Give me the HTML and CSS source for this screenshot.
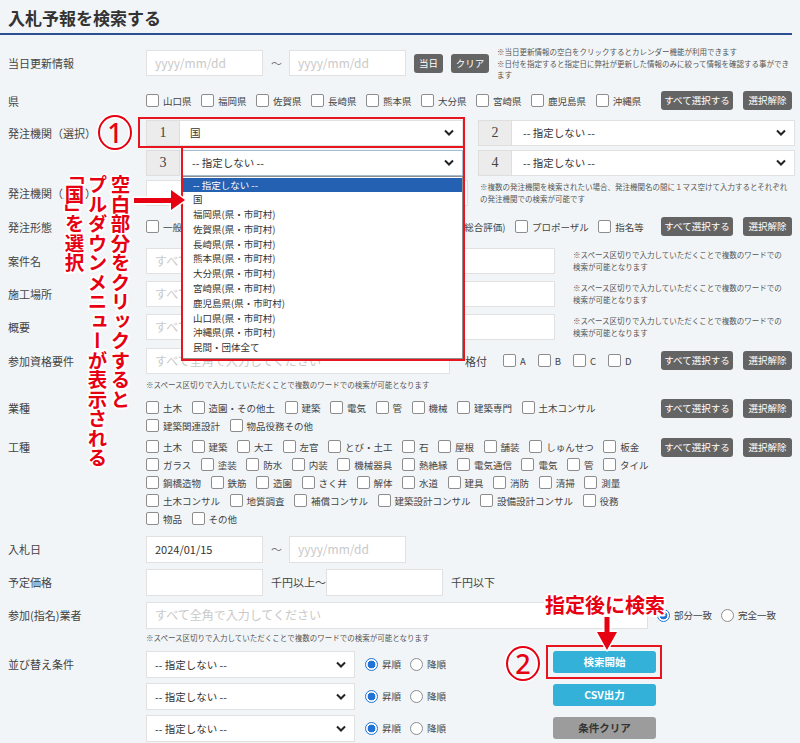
FILE: index.html
```html
<!DOCTYPE html>
<html lang="ja">
<head>
<meta charset="utf-8">
<title>入札予報を検索する</title>
<link rel="stylesheet" href="styles.css">
</head>
<body>
<div class="page">
  <h1 class="title">入札予報を検索する</h1>
  <div class="form">

    <div class="row row-c mt11">
      <div class="label">当日更新情報</div>
      <div class="field">
        <input class="inp w117" type="text" placeholder="yyyy/mm/dd">
        <span class="tilde">〜</span>
        <input class="inp w117" type="text" placeholder="yyyy/mm/dd">
        <button type="button" class="gbtn w29">当日</button>
        <button type="button" class="gbtn w38">クリア</button>
        <p class="note w295">※当日更新情報の空白をクリックするとカレンダー機能が利用できます<br>※日付を指定すると指定日に弊社が更新した情報のみに絞って情報を確認する事ができます</p>
      </div>
    </div>

    <div class="row mt10">
      <div class="label l20">県</div>
      <div class="field f20">
        <div class="cbs">
          <label class="cb"><span class="box"></span>山口県</label>
          <label class="cb"><span class="box"></span>福岡県</label>
          <label class="cb"><span class="box"></span>佐賀県</label>
          <label class="cb"><span class="box"></span>長崎県</label>
          <label class="cb"><span class="box"></span>熊本県</label>
          <label class="cb"><span class="box"></span>大分県</label>
          <label class="cb"><span class="box"></span>宮崎県</label>
          <label class="cb"><span class="box"></span>鹿児島県</label>
          <label class="cb"><span class="box"></span>沖縄県</label>
        </div>
        <div class="btns">
          <button type="button" class="gbtn w72">すべて選択する</button>
          <button type="button" class="gbtn w49">選択解除</button>
        </div>
      </div>
    </div>

    <div class="row mt9">
      <div class="label">発注機関（選択）</div>
      <div class="selgrid">
        <div class="sel">
          <span class="num">1</span>
          <div class="select"><span>国</span><svg class="chev" width="10" height="7" viewBox="0 0 10 7"><path d="M1 1.5 L5 5.5 L9 1.5" fill="none" stroke="#222" stroke-width="2"/></svg></div>
        </div>
        <div class="sel">
          <span class="num">2</span>
          <div class="select pl11"><span>-- 指定しない --</span><svg class="chev" width="10" height="7" viewBox="0 0 10 7"><path d="M1 1.5 L5 5.5 L9 1.5" fill="none" stroke="#222" stroke-width="2"/></svg></div>
        </div>
        <div class="sel">
          <span class="num">3</span>
          <div class="select focus"><span>-- 指定しない --</span><svg class="chev" width="10" height="7" viewBox="0 0 10 7"><path d="M1 1.5 L5 5.5 L9 1.5" fill="none" stroke="#222" stroke-width="2"/></svg>
            <ul class="dropdown">
              <li class="hl">-- 指定しない --</li>
              <li>国</li>
              <li>福岡県(県・市町村)</li>
              <li>佐賀県(県・市町村)</li>
              <li>長崎県(県・市町村)</li>
              <li>熊本県(県・市町村)</li>
              <li>大分県(県・市町村)</li>
              <li>宮崎県(県・市町村)</li>
              <li>鹿児島県(県・市町村)</li>
              <li>山口県(県・市町村)</li>
              <li>沖縄県(県・市町村)</li>
              <li>民間・団体全て</li>
            </ul>
          </div>
        </div>
        <div class="sel">
          <span class="num">4</span>
          <div class="select pl11"><span>-- 指定しない --</span><svg class="chev" width="10" height="7" viewBox="0 0 10 7"><path d="M1 1.5 L5 5.5 L9 1.5" fill="none" stroke="#222" stroke-width="2"/></svg></div>
        </div>
      </div>
    </div>

    <div class="row mt4">
      <div class="label">発注機関（入力）</div>
      <div class="field">
        <input class="inp w322" type="text">
        <p class="note w312 ml12">※複数の発注機関を検索されたい場合、発注機関名の間に１マス空けて入力するとそれぞれの発注機関での検索が可能です</p>
      </div>
    </div>

    <div class="row mt11">
      <div class="label l20">発注形態</div>
      <div class="field f20">
        <div class="cbs">
          <label class="cb"><span class="box"></span>一般競争入札</label>
          <label class="cb"><span class="box"></span>指名競争入札</label>
          <label class="cb"><span class="box"></span>随意契約等</label>
          <label class="cb"><span class="box"></span>一般競争入札(総合評価)</label>
          <label class="cb"><span class="box"></span>プロポーザル</label>
          <label class="cb"><span class="box"></span>指名等</label>
        </div>
        <div class="btns">
          <button type="button" class="gbtn w72">すべて選択する</button>
          <button type="button" class="gbtn w49">選択解除</button>
        </div>
      </div>
    </div>

    <div class="row mt11">
      <div class="label">案件名</div>
      <div class="field">
        <input class="inp w409" type="text" placeholder="すべて全角で入力してください">
        <p class="note w215 ml18">※スペース区切りで入力していただくことで複数のワードでの検索が可能となります</p>
      </div>
    </div>

    <div class="row mt7">
      <div class="label">施工場所</div>
      <div class="field">
        <input class="inp w409" type="text" placeholder="すべて全角で入力してください">
        <p class="note w215 ml18">※スペース区切りで入力していただくことで複数のワードでの検索が可能となります</p>
      </div>
    </div>

    <div class="row mt7">
      <div class="label">概要</div>
      <div class="field">
        <input class="inp w409" type="text" placeholder="すべて全角で入力してください">
        <p class="note w215 ml18">※スペース区切りで入力していただくことで複数のワードでの検索が可能となります</p>
      </div>
    </div>

    <div class="row mt8">
      <div class="label">参加資格要件</div>
      <div class="field">
        <input class="inp w304" type="text" placeholder="すべて全角で入力してください">
        <span class="txt ml15">格付</span>
        <div class="cbs abc">
          <label class="cb"><span class="box"></span>A</label>
          <label class="cb"><span class="box"></span>B</label>
          <label class="cb"><span class="box"></span>C</label>
          <label class="cb"><span class="box"></span>D</label>
        </div>
        <div class="btns">
          <button type="button" class="gbtn w72">すべて選択する</button>
          <button type="button" class="gbtn w49">選択解除</button>
        </div>
      </div>
    </div>
    <p class="note subnote">※スペース区切りで入力していただくことで複数のワードでの検索が可能となります</p>

    <div class="row mt9">
      <div class="label l18">業種</div>
      <div class="field ftop">
        <div class="cbs wrap">
          <label class="cb"><span class="box"></span>土木</label>
          <label class="cb"><span class="box"></span>造園・その他土</label>
          <label class="cb"><span class="box"></span>建築</label>
          <label class="cb"><span class="box"></span>電気</label>
          <label class="cb"><span class="box"></span>管</label>
          <label class="cb"><span class="box"></span>機械</label>
          <label class="cb"><span class="box"></span>建築専門</label>
          <label class="cb"><span class="box"></span>土木コンサル</label>
          <label class="cb"><span class="box"></span>建築関連設計</label>
          <label class="cb"><span class="box"></span>物品役務その他</label>
        </div>
        <div class="btns">
          <button type="button" class="gbtn w72">すべて選択する</button>
          <button type="button" class="gbtn w49">選択解除</button>
        </div>
      </div>
    </div>

    <div class="row mt3">
      <div class="label l18">工種</div>
      <div class="field ftop">
        <div class="cbs wrap">
          <label class="cb"><span class="box"></span>土木</label>
          <label class="cb"><span class="box"></span>建築</label>
          <label class="cb"><span class="box"></span>大工</label>
          <label class="cb"><span class="box"></span>左官</label>
          <label class="cb"><span class="box"></span>とび・土工</label>
          <label class="cb"><span class="box"></span>石</label>
          <label class="cb"><span class="box"></span>屋根</label>
          <label class="cb"><span class="box"></span>舗装</label>
          <label class="cb"><span class="box"></span>しゅんせつ</label>
          <label class="cb"><span class="box"></span>板金</label>
          <label class="cb"><span class="box"></span>ガラス</label>
          <label class="cb"><span class="box"></span>塗装</label>
          <label class="cb"><span class="box"></span>防水</label>
          <label class="cb"><span class="box"></span>内装</label>
          <label class="cb"><span class="box"></span>機械器具</label>
          <label class="cb"><span class="box"></span>熱絶縁</label>
          <label class="cb"><span class="box"></span>電気通信</label>
          <label class="cb"><span class="box"></span>電気</label>
          <label class="cb"><span class="box"></span>管</label>
          <label class="cb"><span class="box"></span>タイル</label>
          <label class="cb"><span class="box"></span>鋼橋造物</label>
          <label class="cb"><span class="box"></span>鉄筋</label>
          <label class="cb"><span class="box"></span>造園</label>
          <label class="cb"><span class="box"></span>さく井</label>
          <label class="cb"><span class="box"></span>解体</label>
          <label class="cb"><span class="box"></span>水道</label>
          <label class="cb"><span class="box"></span>建具</label>
          <label class="cb"><span class="box"></span>消防</label>
          <label class="cb"><span class="box"></span>清掃</label>
          <label class="cb"><span class="box"></span>測量</label>
          <label class="cb"><span class="box"></span>土木コンサル</label>
          <label class="cb"><span class="box"></span>地質調査</label>
          <label class="cb"><span class="box"></span>補償コンサル</label>
          <label class="cb"><span class="box"></span>建築設計コンサル</label>
          <label class="cb"><span class="box"></span>設備設計コンサル</label>
          <label class="cb"><span class="box"></span>役務</label>
          <label class="cb"><span class="box"></span>物品</label>
          <label class="cb"><span class="box"></span>その他</label>
        </div>
        <div class="btns">
          <button type="button" class="gbtn w72">すべて選択する</button>
          <button type="button" class="gbtn w49">選択解除</button>
        </div>
      </div>
    </div>

    <div class="row mt8">
      <div class="label l27">入札日</div>
      <div class="field">
        <input class="inp h27 w117" type="text" value="2024/01/15">
        <span class="tilde">〜</span>
        <input class="inp h27 w117" type="text" placeholder="yyyy/mm/dd">
      </div>
    </div>

    <div class="row mt6">
      <div class="label l27">予定価格</div>
      <div class="field">
        <input class="inp h27 w117" type="text">
        <span class="txt ml8 w55">千円以上〜</span>
        <input class="inp h27 w117 ml7" type="text">
        <span class="txt ml8">千円以下</span>
      </div>
    </div>

    <div class="row mt6">
      <div class="label l27">参加(指名)業者</div>
      <div class="field">
        <input class="inp h27 w502" type="text" placeholder="すべて全角で入力してください">
        <label class="rd ml9"><span class="radio on"></span>部分一致</label>
        <label class="rd ml9"><span class="radio"></span>完全一致</label>
      </div>
    </div>
    <p class="note subnote sub2">※スペース区切りで入力していただくことで複数のワードでの検索が可能となります</p>

    <div class="row mt8">
      <div class="label l27">並び替え条件</div>
      <div class="sorts">
        <div class="sortline">
          <div class="select w200"><span>-- 指定しない --</span><svg class="chev" width="10" height="7" viewBox="0 0 10 7"><path d="M1 1.5 L5 5.5 L9 1.5" fill="none" stroke="#222" stroke-width="2"/></svg></div>
          <label class="rd ml10"><span class="radio on"></span>昇順</label>
          <label class="rd ml9"><span class="radio"></span>降順</label>
        </div>
        <div class="sortline">
          <div class="select w200"><span>-- 指定しない --</span><svg class="chev" width="10" height="7" viewBox="0 0 10 7"><path d="M1 1.5 L5 5.5 L9 1.5" fill="none" stroke="#222" stroke-width="2"/></svg></div>
          <label class="rd ml10"><span class="radio on"></span>昇順</label>
          <label class="rd ml9"><span class="radio"></span>降順</label>
        </div>
        <div class="sortline">
          <div class="select w200"><span>-- 指定しない --</span><svg class="chev" width="10" height="7" viewBox="0 0 10 7"><path d="M1 1.5 L5 5.5 L9 1.5" fill="none" stroke="#222" stroke-width="2"/></svg></div>
          <label class="rd ml10"><span class="radio on"></span>昇順</label>
          <label class="rd ml9"><span class="radio"></span>降順</label>
        </div>
      </div>
      <div class="actions">
        <button type="button" class="mbtn cyan">検索開始</button>
        <button type="button" class="mbtn cyan">CSV出力</button>
        <button type="button" class="mbtn gray">条件クリア</button>
      </div>
    </div>

  </div>

  <!-- annotations -->
  <div class="redbox rb1"></div>
  <div class="redbox rb2"></div>
  <div class="redbox rb3"></div>
  <div class="circ c1">1</div>
  <div class="circ c2">2</div>
  <div class="vtext">空白部分をクリックすると<br>プルダウンメニューが表示される<br>「国」を選択</div>
  <svg class="arrow-r" width="58" height="26" viewBox="0 0 58 26"><polygon points="3,10 40,10 40,2 54,12 40,22 40,15 3,15" fill="#e60012" stroke="#fff" stroke-width="3" paint-order="stroke" stroke-linejoin="round"/></svg>
  <div class="guide2">指定後に検索</div>
  <svg class="arrow-d" width="26" height="38" viewBox="0 0 26 38"><polygon points="10.5,2 15.5,2 15.5,17 23,17 13,35 3,17 10.5,17" fill="#e60012" stroke="#fff" stroke-width="3" paint-order="stroke" stroke-linejoin="round"/></svg>
</div>
</body>
</html>
```

FILE: styles.css
```css
* { box-sizing: border-box; }
html, body { margin: 0; padding: 0; }
body {
  background: #f2f5f7;
  font-family: "Noto Sans CJK JP", "Noto Sans", sans-serif;
  color: #444;
}
.page { position: relative; width: 800px; height: 743px; overflow: hidden; }

.title {
  margin: 0;
  width: 792px;
  padding: 7px 0 4px 8px;
  font-size: 17px;
  line-height: 22px;
  font-weight: 700;
  color: #333;
  border-bottom: 2px solid #2b4f91;
}

.form { padding-right: 8px; }

.note {
  margin: 0;
  font-size: 7.5px;
  line-height: 11.5px;
  color: #555;
}

.row { display: flex; align-items: flex-start; }
.row-c { align-items: center; }

.label {
  flex: 0 0 146px;
  padding-left: 8px;
  font-size: 11px;
  line-height: 26px;
  color: #444;
  white-space: nowrap;
}
.l20 { line-height: 20px; }
.l18 { line-height: 18px; }
.l27 { line-height: 27px; }

.field { flex: 1; display: flex; align-items: center; min-height: 26px; }
.f20 { min-height: 20px; }
.ftop { align-items: flex-start; }

.mt3 { margin-top: 3px; }
.mt4 { margin-top: 4px; }
.mt6 { margin-top: 6px; }
.mt7 { margin-top: 7px; }
.mt8 { margin-top: 8px; }
.mt9 { margin-top: 9px; }
.mt10 { margin-top: 10px; }
.mt11 { margin-top: 11px; }
.ml7 { margin-left: 7px; }
.ml8 { margin-left: 8px; }
.ml9 { margin-left: 9px; }
.ml10 { margin-left: 10px; }
.ml12 { margin-left: 12px; }
.ml15 { margin-left: 15px; }
.ml18 { margin-left: 18px; }

.inp {
  height: 26px;
  border: 1px solid #e1e1e1;
  background: #fff;
  padding: 0 8px;
  font-family: "Noto Sans CJK JP", "Noto Sans", sans-serif;
  font-size: 11px;
  color: #333;
  outline: none;
  margin: 0;
}
.inp.h27 { height: 27px; }
.inp::placeholder { color: #c9c9c9; font-size: 12px; }
.w117 { width: 117px; }
.w304 { width: 304px; }
.w322 { width: 322px; }
.w409 { width: 409px; }
.w502 { width: 502px; }
.w200 { width: 200px; flex: 0 0 200px; }
.w55 { display: inline-block; width: 55px; }

.tilde { width: 10px; margin: 0 8px; font-size: 11px; color: #777; text-align: center; }
.txt { font-size: 11px; color: #444; white-space: nowrap; }

.gbtn {
  height: 19px;
  padding: 0;
  border: 0;
  border-radius: 3px;
  background: #646464;
  color: #fff;
  font-family: "Noto Sans CJK JP", sans-serif;
  font-size: 9.5px;
  line-height: 19px;
  text-align: center;
  white-space: nowrap;
}
.field > .gbtn { margin-left: 8px; }
.w29 { width: 29px; }
.w38 { width: 38px; }
.w72 { width: 72px; }
.w49 { width: 49px; }

.field > .note.w295 { margin-left: 8px; }
.w295 { width: 295px; }
.w312 { width: 312px; }
.w215 { width: 215px; }
.subnote { margin: 6px 0 0 146px; line-height: 10px; }
.subnote.sub2 { margin-top: 4px; }

.btns { margin-left: auto; display: flex; gap: 10px; }

.cbs {
  display: flex;
  flex-wrap: nowrap;
  column-gap: 9.5px;
  width: 510px;
}
.cbs.wrap { flex-wrap: wrap; }
.cbs.abc { width: auto; column-gap: 12px; margin-left: 16px; }
.cb {
  display: inline-flex;
  align-items: center;
  height: 18px;
  font-size: 9.5px;
  color: #444;
  white-space: nowrap;
}
.f20 .cb { height: 20px; }
.box {
  width: 13px;
  height: 13px;
  margin-right: 4px;
  border: 1px solid #8d8d8d;
  border-radius: 2px;
  background: #fff;
  flex: 0 0 13px;
}

.rd {
  display: inline-flex;
  align-items: center;
  font-size: 9.5px;
  color: #444;
  white-space: nowrap;
}
.radio {
  width: 13px;
  height: 13px;
  margin-right: 4px;
  border: 1px solid #8d8d8d;
  border-radius: 50%;
  background: #fff;
  flex: 0 0 13px;
}
.radio.on {
  border: 1.5px solid #1f74d6;
  background: radial-gradient(circle, #1f74d6 0 3.6px, #fff 4.2px);
}

/* order-agency selects */
.selgrid {
  display: grid;
  grid-template-columns: 317px 317px;
  column-gap: 15px;
  row-gap: 4px;
}
.sel { display: flex; height: 26px; }
.num {
  flex: 0 0 34px;
  height: 26px;
  background: #ececec;
  border: 1px solid #dedede;
  font-family: "Liberation Serif", serif;
  font-size: 14px;
  line-height: 24px;
  color: #444;
  text-align: center;
}
.select {
  position: relative;
  flex: 1;
  height: 26px;
  background: #fff;
  border: 1px solid #e1e1e1;
  padding: 0 8px 0 10px;
  display: flex;
  align-items: center;
  justify-content: space-between;
  font-size: 10.5px;
  color: #333;
}
.sel .select { border-left: 0; }
.pl11 { padding-left: 11px; }
.select.focus { border: 1px solid #a7bbd2; margin-left: 1px; }
.chev { flex: 0 0 10px; }

.dropdown {
  position: absolute;
  left: 0;
  top: 25px;
  width: 281px;
  margin: 0;
  padding: 1px 0 3px;
  list-style: none;
  background: #fff;
  border: 1px solid #8f8f8f;
  z-index: 5;
}
.dropdown li {
  height: 14.8px;
  line-height: 14.8px;
  padding-left: 10px;
  font-size: 9.5px;
  color: #333;
  white-space: nowrap;
}
.dropdown li.hl { background: #2461b2; color: #fff; }

/* sort + actions */
.sorts { flex: 0 0 300px; display: flex; flex-direction: column; gap: 5px; }
.sortline { display: flex; align-items: center; height: 27px; }
.sortline .select { height: 27px; padding-left: 8px; }
.actions {
  margin-left: 107px;
  display: flex;
  flex-direction: column;
  gap: 11px;
}
.mbtn {
  width: 103px;
  height: 22px;
  padding: 0;
  border: 0;
  border-radius: 3px;
  font-family: "Noto Sans CJK JP", sans-serif;
  font-size: 10.5px;
  font-weight: 700;
  line-height: 22px;
  text-align: center;
}
.cyan { background: #33b1d9; color: #fff; }
.gray { background: #9c9c9c; color: #333; }

/* annotations */
.redbox { position: absolute; border: 2px solid #e8141e; z-index: 10; }
.rb1 { left: 138px; top: 117px; width: 327px; height: 31px; }
.rb2 { left: 181px; top: 146px; width: 284px; height: 215px; border-top: 0; }
.rb3 { left: 546px; top: 645px; width: 116px; height: 34px; }

.circ {
  position: absolute;
  width: 34px;
  height: 35px;
  border: 2.5px solid #e60012;
  border-radius: 50%;
  box-shadow: 0 0 0 1.5px #fff, inset 0 0 0 1.5px #fff;
  display: flex;
  align-items: center;
  justify-content: center;
  font-family: "Noto Sans", sans-serif;
  font-size: 27px;
  font-weight: 500;
  line-height: 1;
  color: #e60012;
  z-index: 11;
}
.c1 { left: 98px; top: 115px; }
.c2 { left: 506px; top: 646px; }

.vtext {
  position: absolute;
  left: 63px;
  top: 175px;
  writing-mode: vertical-rl;
  font-family: "Noto Sans CJK JP", sans-serif;
  font-size: 19.5px;
  line-height: 23px;
  font-weight: 700;
  color: #e60012;
  font-feature-settings: "vhal" 1;
  white-space: nowrap;
  z-index: 11;
  text-shadow: 2px 0 0 #fff, -2px 0 0 #fff, 0 2px 0 #fff, 0 -2px 0 #fff,
    1.5px 1.5px 0 #fff, -1.5px -1.5px 0 #fff, 1.5px -1.5px 0 #fff, -1.5px 1.5px 0 #fff;
}
.guide2 {
  position: absolute;
  left: 545px;
  top: 593px;
  font-family: "Noto Sans CJK JP", sans-serif;
  font-size: 20px;
  line-height: 24px;
  font-weight: 700;
  color: #e60012;
  white-space: nowrap;
  z-index: 11;
  text-shadow: 2px 0 0 #fff, -2px 0 0 #fff, 0 2px 0 #fff, 0 -2px 0 #fff,
    1.5px 1.5px 0 #fff, -1.5px -1.5px 0 #fff, 1.5px -1.5px 0 #fff, -1.5px 1.5px 0 #fff;
}
.arrow-r { position: absolute; left: 131px; top: 188px; z-index: 11; }
.arrow-d { position: absolute; left: 594px; top: 615px; z-index: 11; }
```
